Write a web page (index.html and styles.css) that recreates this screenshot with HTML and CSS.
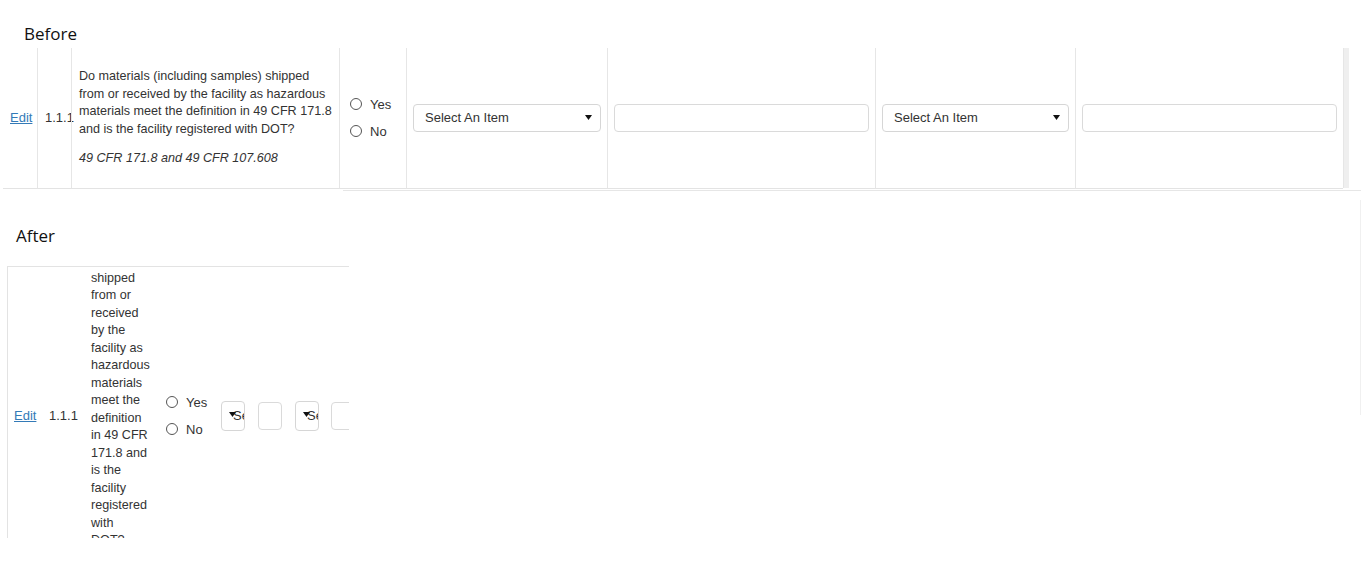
FILE: index.html
```html
<!DOCTYPE html>
<html lang="en">
<head>
    <meta charset="UTF-8">
    <meta name="viewport" content="width=device-width, initial-scale=1.0">
    <title>Before / After</title>
    <link rel="stylesheet" href="styles.css">
</head>
<body>
    <div class="caption caption-before">Before</div>

    <div class="sheet sheet-before">
        <div class="row">
            <div class="cell cell-edit"><a href="#">Edit</a></div>
            <div class="cell cell-num">1.1.1</div>
            <div class="cell cell-question">
                <p class="question">Do materials (including samples) shipped from or received by the facility as hazardous materials meet the definition in 49 CFR 171.8 and is the facility registered with DOT?</p>
                <p class="cite">49 CFR 171.8 and 49 CFR 107.608</p>
            </div>
            <div class="cell cell-answer">
                <label class="radio"><span class="dot"></span>Yes</label>
                <label class="radio"><span class="dot"></span>No</label>
            </div>
            <div class="cell">
                <div class="select"><span>Select An Item</span><svg class="caret" width="7" height="5" viewBox="0 0 7 5"><path d="M0 0h7L3.5 5z"/></svg></div>
            </div>
            <div class="cell"><input class="text-input" type="text"></div>
            <div class="cell">
                <div class="select"><span>Select An Item</span><svg class="caret" width="7" height="5" viewBox="0 0 7 5"><path d="M0 0h7L3.5 5z"/></svg></div>
            </div>
            <div class="cell"><input class="text-input" type="text"></div>
        </div>
        <div class="scroll-track"></div>
    </div>

    <div class="caption caption-after">After</div>

    <div class="viewport">
        <div class="sheet sheet-after">
            <div class="row">
                <div class="cell cell-edit"><a href="#">Edit</a></div>
                <div class="cell cell-num">1.1.1</div>
                <div class="cell cell-question">
                    <p class="question">Do materials (including samples) shipped from or received by the facility as hazardous materials meet the definition in 49 CFR 171.8 and is the facility registered with DOT?</p>
                    <p class="cite">49 CFR 171.8 and 49 CFR 107.608</p>
                </div>
                <div class="cell cell-answer">
                    <label class="radio"><span class="dot"></span>Yes</label>
                    <label class="radio"><span class="dot"></span>No</label>
                </div>
                <div class="cell">
                    <div class="select"><span>Select An Item</span><svg class="caret" width="7" height="5" viewBox="0 0 7 5"><path d="M0 0h7L3.5 5z"/></svg></div>
                </div>
                <div class="cell"><input class="text-input" type="text"></div>
                <div class="cell">
                    <div class="select"><span>Select An Item</span><svg class="caret" width="7" height="5" viewBox="0 0 7 5"><path d="M0 0h7L3.5 5z"/></svg></div>
                </div>
                <div class="cell"><input class="text-input" type="text"></div>
            </div>
        </div>
    </div>

    <!-- edges of the pasted screenshot -->
    <div class="paste-edge"></div>
    <div class="paste-side"></div>
</body>
</html>
```

FILE: styles.css
```css
body {
    margin: 0;
    padding: 0;
    position: relative;
    font-family: "Liberation Sans", Arial, sans-serif;
    font-size: 13px;
    color: #333;
    background: #fff;
}

.caption {
    font-family: "Open Sans", "Noto Sans", sans-serif;
    font-size: 17px;
    line-height: 24px;
    color: #111;
}

.caption-before {
    padding: 22px 0 2px 24px;
}

.caption-after {
    margin-top: 35px;
    padding-left: 16px;
}

/* table row */
.sheet {
    display: flex;
}

.sheet-before {
    margin-left: 3px;
}

.row {
    display: grid;
}

.sheet-before .row {
    grid-template-columns: 34px 34px 268px 67px 201px 268px 200px 268px;
}

.cell {
    box-sizing: border-box;
    display: flex;
    align-items: center;
    padding: 0 6px;
}

.sheet-before .cell {
    border-left: 1px solid #e6e6e6;
    border-bottom: 1px solid #e3e3e3;
}

.sheet-before .cell-edit {
    border-left: none;
    padding-left: 7px;
}

.scroll-track {
    width: 5px;
    border-left: 1px solid #e6e6e6;
    background: #efefef;
    margin-bottom: 1px;
}

.cell-edit a {
    color: #337ab7;
    text-decoration: underline;
}

.cell-num {
    padding-left: 7px;
    white-space: nowrap;
    overflow: visible;
}

.cell-question {
    flex-direction: column;
    align-items: flex-start;
    justify-content: center;
    padding: 20px 7px 20px 7px;
    font-size: 12.6px;
    line-height: 17.5px;
}

.question {
    margin: 0 0 12px;
}

.cite {
    margin: 0;
    font-style: italic;
}

.cell-answer {
    flex-direction: column;
    align-items: flex-start;
    justify-content: center;
    gap: 7px;
    padding-left: 10px;
}

.radio {
    display: flex;
    align-items: center;
    height: 20px;
}

.dot {
    width: 10px;
    height: 10px;
    border: 1px solid #555;
    border-radius: 50%;
    margin-right: 8px;
}

.select {
    position: relative;
    box-sizing: border-box;
    width: 100%;
    height: 28px;
    border: 1px solid #d6d6d6;
    border-radius: 4px;
    padding-left: 11px;
    line-height: 26px;
    white-space: nowrap;
    overflow: hidden;
    color: #333;
}

.caret {
    position: absolute;
    right: 8px;
    top: 10px;
    fill: #111;
}

.text-input {
    box-sizing: border-box;
    width: 100%;
    height: 28px;
    margin: 0;
    border: 1px solid #dadada;
    border-radius: 4px;
    padding: 0 6px;
    font: inherit;
    background: #fff;
}

/* the squeezed version */
.viewport {
    box-sizing: border-box;
    margin: 18px 0 0 7px;
    width: 342px;
    height: 272px;
    border-top: 1px solid #e3e3e3;
    border-left: 1px solid #e3e3e3;
    overflow: hidden;
}

.sheet-after {
    margin-top: -87px;
}

.sheet-after .row {
    grid-template-columns: 34px 34px 82px 56px 37px 38px 36px 40px;
}

.sheet-after .cell {
    padding-right: 0;
}

.sheet-after .cell-edit {
    padding-left: 6px;
}

.sheet-after .cell-question {
    padding-left: 15px;
    padding-right: 8px;
}

.sheet-after .cell-answer {
    padding-left: 8px;
}

.sheet-after .cell:nth-child(5),
.sheet-after .cell:nth-child(6) {
    padding-left: 7px;
}

.sheet-after .select,
.sheet-after .text-input {
    flex: none;
    width: 24px;
}

.sheet-after .select {
    height: 30px;
    line-height: 28px;
}

.paste-edge {
    position: absolute;
    top: 190px;
    left: 343px;
    right: 0;
    height: 1px;
    background: #e6e6e6;
}

.paste-side {
    position: absolute;
    top: 200px;
    right: 0;
    width: 1px;
    height: 215px;
    background: #f0f0f0;
}
```
